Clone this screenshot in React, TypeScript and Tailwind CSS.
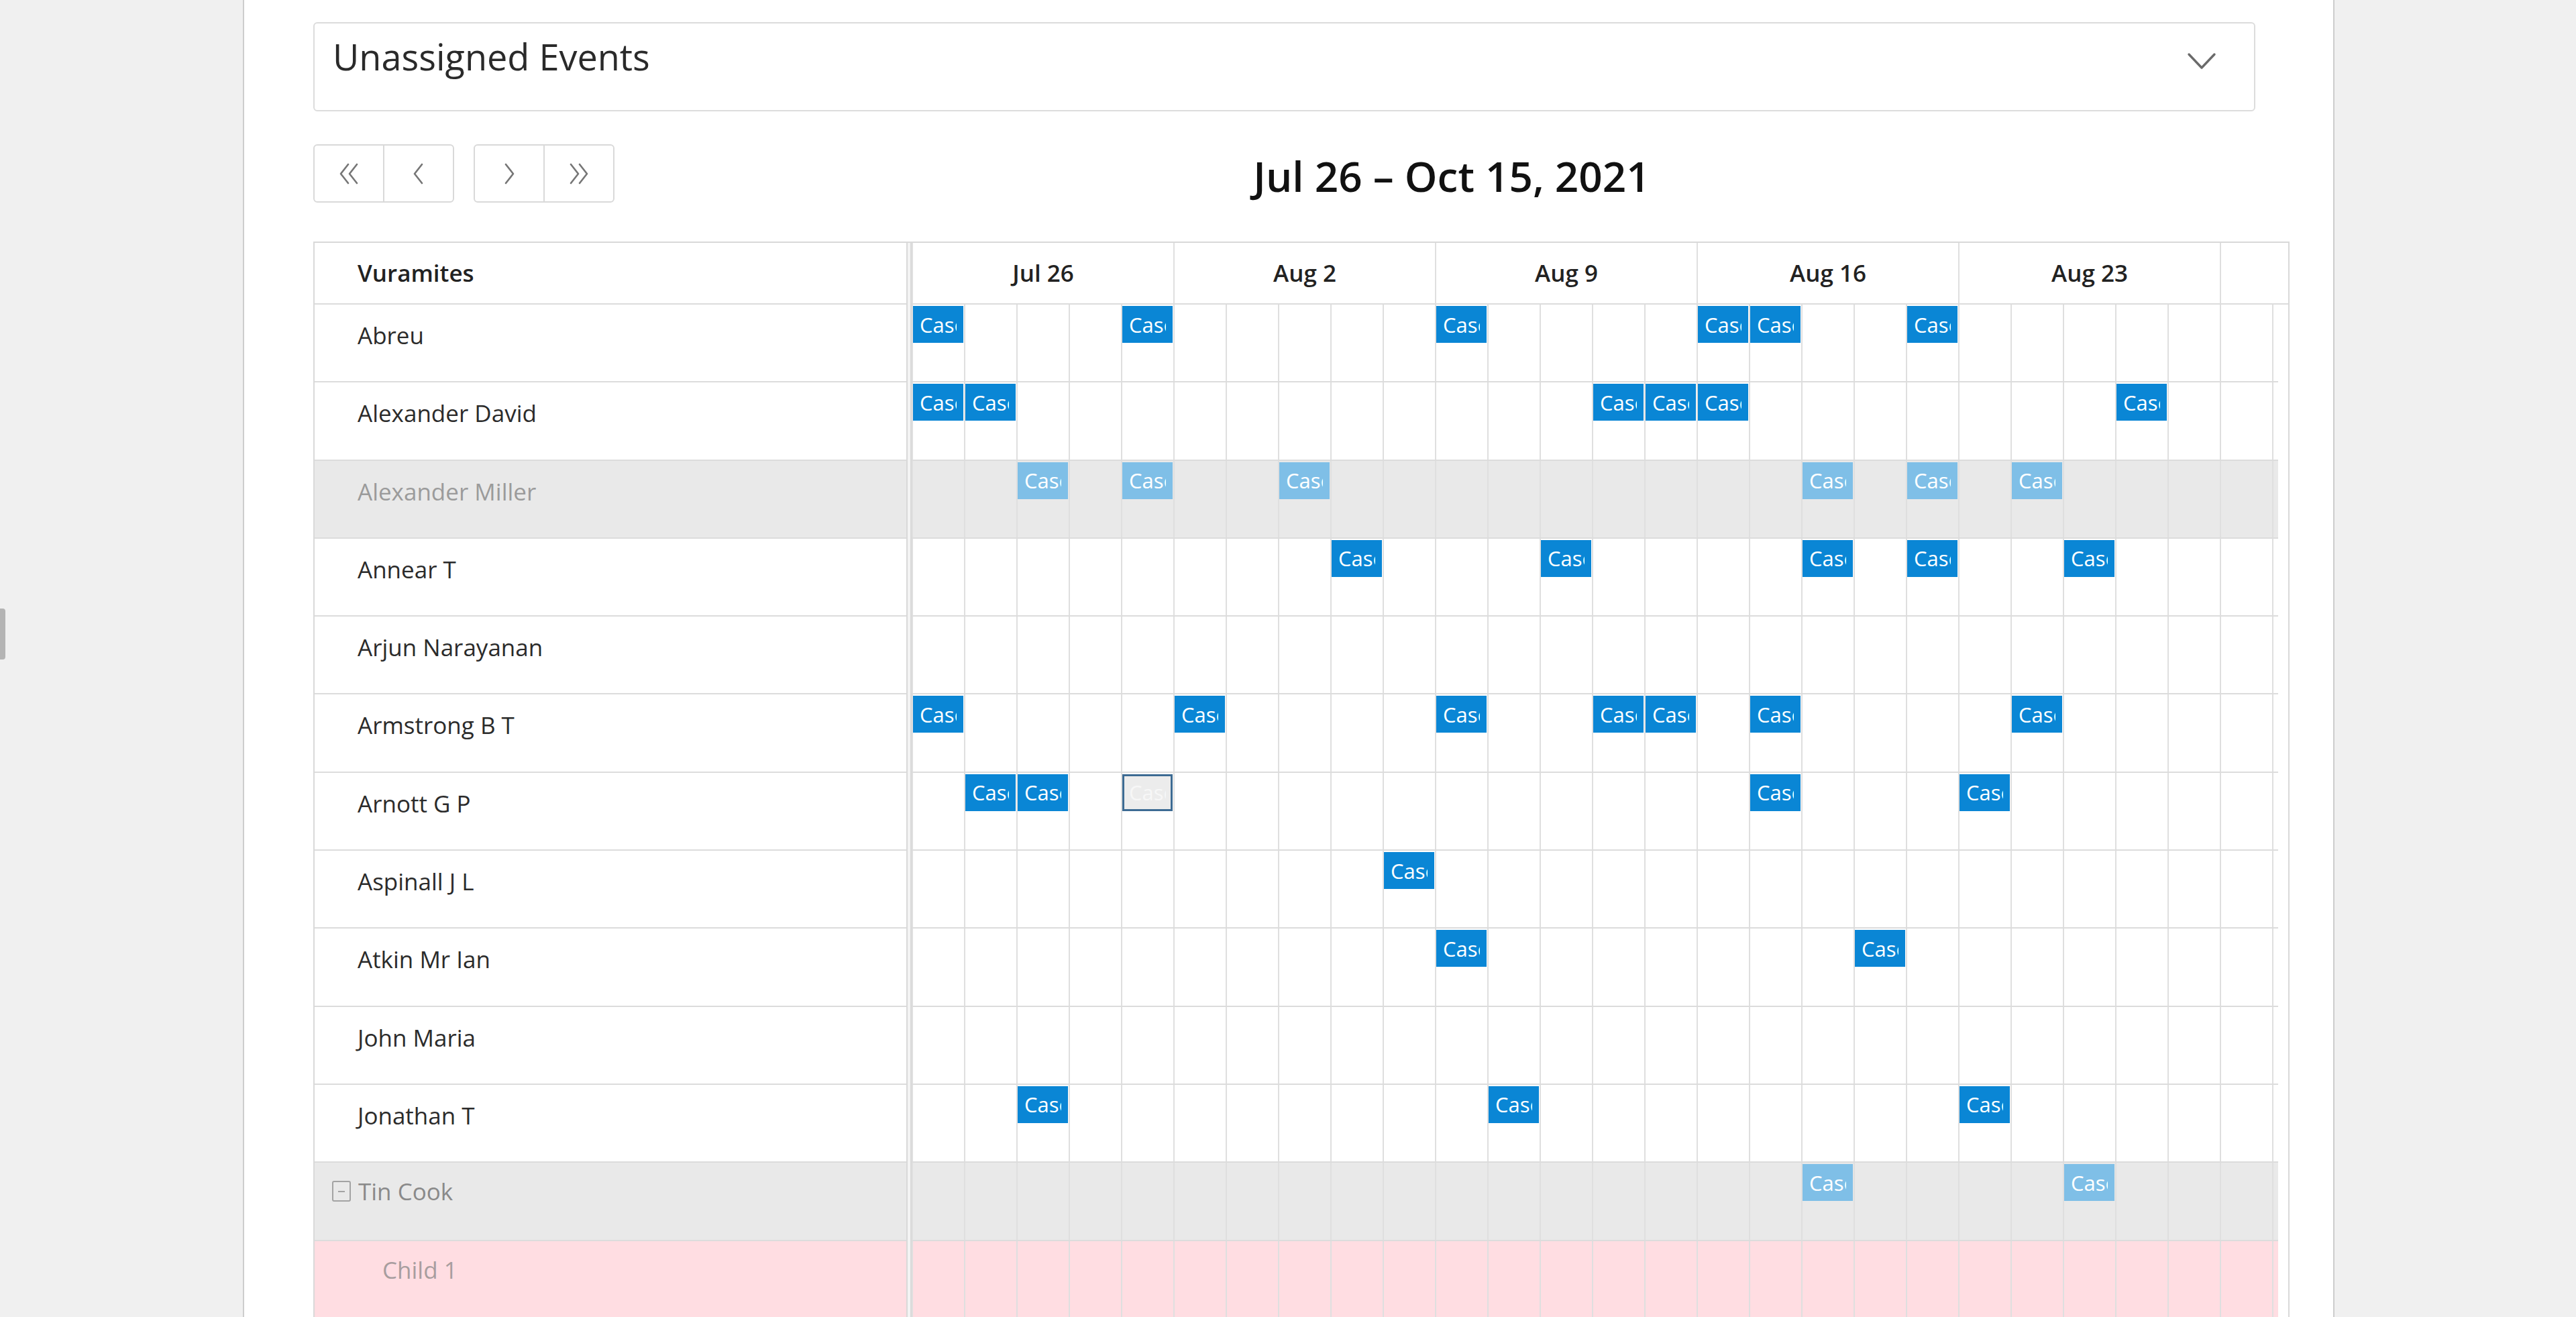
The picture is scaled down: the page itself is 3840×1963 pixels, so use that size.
import React from "react";

type Row = {
  name: string;
  ev: number[];
  outlined?: number[];
  kind?: "normal" | "gray" | "group" | "child";
};

const rows: Row[] = [
  { name: "Abreu", ev: [0, 4, 10, 15, 16, 19] },
  { name: "Alexander David", ev: [0, 1, 13, 14, 15, 23] },
  { name: "Alexander Miller", ev: [2, 4, 7, 17, 19, 21], kind: "gray" },
  { name: "Annear T", ev: [8, 12, 17, 19, 22] },
  { name: "Arjun Narayanan", ev: [] },
  { name: "Armstrong B T", ev: [0, 5, 10, 13, 14, 16, 21] },
  { name: "Arnott G P", ev: [1, 2, 16, 20], outlined: [4] },
  { name: "Aspinall J L", ev: [9] },
  { name: "Atkin Mr Ian", ev: [10, 18] },
  { name: "John Maria", ev: [] },
  { name: "Jonathan T", ev: [2, 11, 20] },
  { name: "Tin Cook", ev: [17, 22], kind: "group" },
  { name: "Child 1", ev: [], kind: "child" },
];

const weeks = ["Jul 26", "Aug 2", "Aug 9", "Aug 16", "Aug 23"];
const days = Array.from({ length: 27 }, (_, i) => i);

function Chevron({ dir, double }: { dir: "left" | "right"; double?: boolean }) {
  if (double) {
    return dir === "left" ? (
      <svg width="34" height="32" viewBox="0 0 34 32" fill="none" stroke="#767676" strokeWidth="2.6" strokeLinecap="round" strokeLinejoin="round">
        <polyline points="16,2 5,16 16,30" />
        <polyline points="29,2 18,16 29,30" />
      </svg>
    ) : (
      <svg width="34" height="32" viewBox="0 0 34 32" fill="none" stroke="#767676" strokeWidth="2.6" strokeLinecap="round" strokeLinejoin="round">
        <polyline points="5,2 16,16 5,30" />
        <polyline points="18,2 29,16 18,30" />
      </svg>
    );
  }
  return dir === "left" ? (
    <svg width="20" height="32" viewBox="0 0 20 32" fill="none" stroke="#767676" strokeWidth="2.6" strokeLinecap="round" strokeLinejoin="round">
      <polyline points="15,2 4,16 15,30" />
    </svg>
  ) : (
    <svg width="20" height="32" viewBox="0 0 20 32" fill="none" stroke="#767676" strokeWidth="2.6" strokeLinecap="round" strokeLinejoin="round">
      <polyline points="5,2 16,16 5,30" />
    </svg>
  );
}

function Event({ variant }: { variant: "solid" | "light" | "outlined" }) {
  const cls =
    variant === "solid"
      ? "bg-[#0a86d5] text-white pl-[10px] pr-[10px]"
      : variant === "light"
      ? "bg-[#7fbfe7] text-white pl-[10px] pr-[10px]"
      : "bg-[#ececec] text-[#f7f7f7] border-[3px] border-[#3d6b93] pl-[7px] pr-[7px]";
  return (
    <div className={`mt-[2px] w-[75px] h-[55px] flex items-center ${cls}`}>
      <div className="min-w-0 overflow-hidden whitespace-nowrap text-[31px] leading-[40px]">Case 1</div>
    </div>
  );
}

function TimelineRow({ row }: { row: Row }) {
  const bg =
    row.kind === "gray" || row.kind === "group"
      ? "bg-[#e9e9e9]"
      : row.kind === "child"
      ? "bg-[#ffdde2]"
      : "bg-white";
  const light = row.kind === "gray" || row.kind === "group";
  return (
    <div className="flex w-[2052px] h-full">
      <div className={`flex w-[2037px] h-full overflow-hidden border-b-2 border-[#dcdcdc] ${bg}`}>
        {days.map((d) => (
          <div key={d} className="w-[78px] shrink-0 h-full border-l-2 border-[#dfdfdf]">
            {row.ev.includes(d) ? <Event variant={light ? "light" : "solid"} /> : null}
            {row.outlined && row.outlined.includes(d) ? <Event variant="outlined" /> : null}
          </div>
        ))}
      </div>
      <div className="w-[15px] h-full bg-white" />
    </div>
  );
}

function NameCell({ row }: { row: Row }) {
  if (row.kind === "group") {
    return (
      <div className="w-[882px] h-full border-b-2 border-[#dcdcdc] bg-[#e9e9e9] flex items-start pt-[17px] pl-[26px] text-[35px] leading-[1.5] text-[#8a8a8a]">
        <div className="mt-[10px] w-[28px] h-[31px] border-2 border-[#a3a3a3] rounded-[3px] flex items-center justify-center">
          <div className="w-[10px] h-[2px] bg-[#a3a3a3]" />
        </div>
        <span className="ml-[11px]">{row.name}</span>
      </div>
    );
  }
  if (row.kind === "child") {
    return (
      <div className="w-[882px] h-full border-b-2 border-[#dcdcdc] bg-[#ffdde2] flex items-start pt-[17px] pl-[101px] text-[35px] leading-[1.5] text-[#a89d9f]">
        {row.name}
      </div>
    );
  }
  const gray = row.kind === "gray";
  return (
    <div
      className={`w-[882px] h-full border-b-2 border-[#dcdcdc] flex items-start pt-[20px] pl-[64px] text-[35px] leading-[1.5] ${
        gray ? "bg-[#e9e9e9] text-[#9b9b9b]" : "bg-white text-[#2b2b2b]"
      }`}
    >
      {row.name}
    </div>
  );
}

function Divider() {
  return <div className="w-[8px] h-full shrink-0 border-x-2 border-[#d9d9d9] bg-[#f4f4f4]" />;
}

export default function App() {
  return (
    <div
      className="w-[3840px] h-[1963px] overflow-hidden flex bg-[#f0f0f0]"
      style={{ fontFamily: '"Open Sans", "Noto Sans", sans-serif' }}
    >
      {/* left gray area */}
      <div className="w-[362px] shrink-0 flex flex-col">
        <div className="mt-[907px] w-[8px] h-[76px] bg-[#b4b4b4] rounded-r-[4px]" />
      </div>

      {/* main white panel */}
      <div className="w-[3118px] shrink-0 h-full bg-white border-x-2 border-[#cdcdcd] pt-[33px] pl-[103px]">
        {/* Unassigned events */}
        <div className="w-[2895px] h-[133px] border-2 border-[#dcdcdc] rounded-[6px] flex justify-between items-start">
          <div className="pt-[12px] pl-[27px] text-[54px] leading-[74px] text-[#2a2a2a]">Unassigned Events</div>
          <svg className="mt-[43px] mr-[56px]" width="44" height="26" viewBox="0 0 44 26" fill="none" stroke="#6a6a6a" strokeWidth="3.4" strokeLinecap="round" strokeLinejoin="round">
            <polyline points="3,3 22,23 41,3" />
          </svg>
        </div>

        {/* toolbar */}
        <div className="mt-[49px] w-[2945px] h-[87px] flex justify-between items-center">
          <div className="flex gap-[29px] h-full">
            <div className="flex w-[210px] h-full border-2 border-[#d9d9d9] rounded-[6px]">
              <div className="flex-1 flex items-center justify-center">
                <Chevron dir="left" double />
              </div>
              <div className="flex-1 flex items-center justify-center border-l-2 border-[#d9d9d9]">
                <Chevron dir="left" />
              </div>
            </div>
            <div className="flex w-[210px] h-full border-2 border-[#d9d9d9] rounded-[6px]">
              <div className="flex-1 flex items-center justify-center">
                <Chevron dir="right" />
              </div>
              <div className="flex-1 flex items-center justify-center border-l-2 border-[#d9d9d9]">
                <Chevron dir="right" double />
              </div>
            </div>
          </div>
          <div className="pt-[7px] text-[62px] leading-none font-semibold text-[#111111]">Jul 26 – Oct 15, 2021</div>
          <div />
        </div>

        {/* scheduler table */}
        <div className="mt-[58px] w-[2946px] border-t-2 border-x-2 border-[#d9d9d9]">
          {/* header */}
          <div className="flex h-[92px]">
            <div className="w-[882px] h-full border-b-2 border-[#dcdcdc] flex items-center pl-[64px] text-[35px] font-semibold text-[#222222]">
              Vuramites
            </div>
            <Divider />
            <div className="flex w-[2052px] h-full border-b-2 border-[#dcdcdc]">
              {weeks.map((w) => (
                <div key={w} className="w-[390px] shrink-0 h-full border-l-2 border-[#dfdfdf] flex items-center justify-center text-[35px] font-semibold text-[#222222]">
                  {w}
                </div>
              ))}
              <div className="flex-1 h-full border-l-2 border-[#dfdfdf]" />
            </div>
          </div>
          {/* body */}
          {rows.map((r) => (
            <div key={r.name} className="flex h-[116.3px]">
              <NameCell row={r} />
              <Divider />
              <TimelineRow row={r} />
            </div>
          ))}
        </div>
      </div>

      {/* right gray area */}
      <div className="flex-1 h-full bg-[#f0f0f0]" />
    </div>
  );
}
